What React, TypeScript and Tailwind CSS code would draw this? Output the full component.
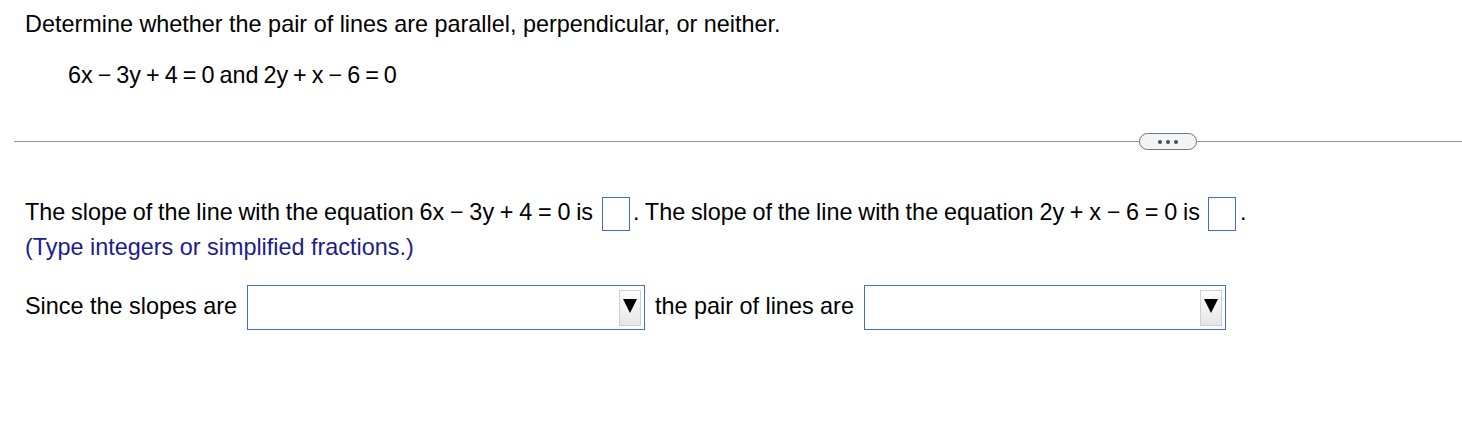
import React from 'react'

function AnswerBox({ className = '' }: { className?: string }) {
  return <span className={`inline-block h-[34px] w-[28px] border border-[#3d6fd6] bg-white align-middle ${className}`} />
}

function Dropdown({ width, className = '' }: { width: number; className?: string }) {
  return (
    <span
      className={`inline-flex h-[45px] items-center justify-end border border-[#3d6fd6] bg-white pr-[3px] align-middle ${className}`}
      style={{ width }}
    >
      <span className="flex h-[36px] w-[22px] items-center justify-center border border-[#cfcfcf] bg-gradient-to-b from-[#fdfdfd] to-[#e6e6e6] pb-[3px]">
        <svg width="14" height="14" viewBox="0 0 14 14">
          <polygon points="0,0 14,0 7,14" fill="#000" />
        </svg>
      </span>
    </span>
  )
}

export default function App() {
  return (
    <div className="min-h-screen bg-white font-['Liberation_Sans',Arial,sans-serif] text-[23.4px] text-black">
      <div className="px-[25px] pt-[10px]">
        <p className="leading-[28px]">Determine whether the pair of lines are parallel, perpendicular, or neither.</p>
        <p className="mt-[23px] pl-[43px] leading-[28px] [word-spacing:-1.5px]">6x − 3y + 4 = 0 and 2y + x − 6 = 0</p>
      </div>

      <div className="mt-[44px] ml-[14px] flex items-center">
        <div className="h-px w-[1125px] bg-[#8d949c]" />
        <button className="flex h-[17px] w-[58px] items-center justify-center gap-[4px] rounded-full border border-[#6f7780] bg-[#f3f4f6]">
          <span className="h-[4px] w-[4px] rounded-full bg-[#4b5058]" />
          <span className="h-[4px] w-[4px] rounded-full bg-[#4b5058]" />
          <span className="h-[4px] w-[4px] rounded-full bg-[#4b5058]" />
        </button>
        <div className="h-px flex-1 bg-[#8d949c]" />
      </div>

      <div className="px-[25px] pt-[45px]">
        <p className="leading-[34px]">
          <span className="[word-spacing:-0.75px]">The slope of the line with the equation 6x − 3y + 4 = 0 is</span>
          <AnswerBox className="ml-[9px] mr-[3px]" />
          <span className="[word-spacing:-0.75px]">. The slope of the line with the equation 2y + x − 6 = 0 is</span>
          <AnswerBox className="ml-[8px] mr-[4px]" />.
        </p>
        <p className="mt-[2px] leading-[28px] text-[#1b1d8c]">(Type integers or simplified fractions.)</p>

        <p className="mt-[22px] leading-[46px]">
          Since the slopes are
          <Dropdown width={398} className="ml-[10px] mr-[10px]" />
          the pair of lines are
          <Dropdown width={362} className="ml-[10px]" />
        </p>
      </div>
    </div>
  )
}
